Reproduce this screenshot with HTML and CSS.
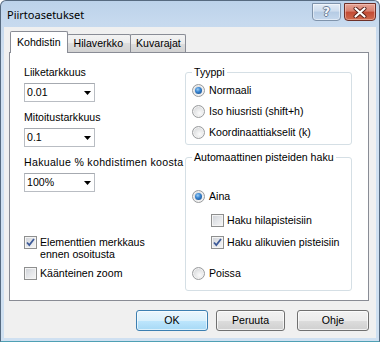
FILE: index.html
```html
<!DOCTYPE html>
<html>
<head>
<meta charset="utf-8">
<link rel="stylesheet" href="styles.css">
</head>
<body>
<div class="window">
  <div class="titlebar">
    <span class="title">Piirtoasetukset</span>
    <div class="caption">
      <div class="cbtn help"><span class="qmark">?</span></div>
      <div class="cbtn close">
        <svg width="14" height="11" viewBox="0 0 14 11">
          <path d="M2.5 1.5 L11.5 9.5 M11.5 1.5 L2.5 9.5" stroke="#5a2018" stroke-width="4" stroke-linecap="round"/>
          <path d="M2.5 1.5 L11.5 9.5 M11.5 1.5 L2.5 9.5" stroke="#ffffff" stroke-width="2.2" stroke-linecap="round"/>
        </svg>
      </div>
    </div>
  </div>
  <div class="client">
    <div class="tabs">
      <div class="tab active">Kohdistin</div>
      <div class="tab t2">Hilaverkko</div>
      <div class="tab t3">Kuvarajat</div>
    </div>
    <div class="panel">
      <div class="left">
        <div class="label">Liiketarkkuus</div>
        <div class="combo"><span>0.01</span><svg class="arrow" width="7" height="4" viewBox="0 0 7 4"><polygon points="0,0 7,0 3.5,4" fill="#000"/></svg></div>
        <div class="label">Mitoitustarkkuus</div>
        <div class="combo"><span>0.1</span><svg class="arrow" width="7" height="4" viewBox="0 0 7 4"><polygon points="0,0 7,0 3.5,4" fill="#000"/></svg></div>
        <div class="label wide">Hakualue % kohdistimen koosta</div>
        <div class="combo"><span>100%</span><svg class="arrow" width="7" height="4" viewBox="0 0 7 4"><polygon points="0,0 7,0 3.5,4" fill="#000"/></svg></div>

        <div class="check-row first">
          <span class="cb checked"><svg width="11" height="11" viewBox="0 0 11 11"><path d="M2 5.5 L4.3 8 L9 2" fill="none" stroke="#3d5a98" stroke-width="1.8"/></svg></span>
          <span class="cb-text">Elementtien merkkaus<br>ennen osoitusta</span>
        </div>
        <div class="check-row second">
          <span class="cb"></span>
          <span class="cb-text">Käänteinen zoom</span>
        </div>
      </div>
      <div class="right">
        <fieldset class="group g1">
          <legend>Tyyppi</legend>
          <div class="opt"><span class="radio on"></span><span>Normaali</span></div>
          <div class="opt"><span class="radio"></span><span>Iso hiusristi (shift+h)</span></div>
          <div class="opt"><span class="radio"></span><span>Koordinaattiakselit (k)</span></div>
        </fieldset>
        <fieldset class="group g2">
          <legend>Automaattinen pisteiden haku</legend>
          <div class="opt aina"><span class="radio on"></span><span>Aina</span></div>
          <div class="opt sub hila"><span class="cb"></span><span>Haku hilapisteisiin</span></div>
          <div class="opt sub alik"><span class="cb checked"><svg width="11" height="11" viewBox="0 0 11 11"><path d="M2 5.5 L4.3 8 L9 2" fill="none" stroke="#3d5a98" stroke-width="1.8"/></svg></span><span>Haku alikuvien pisteisiin</span></div>
          <div class="opt poissa"><span class="radio"></span><span>Poissa</span></div>
        </fieldset>
      </div>
    </div>
    <div class="buttons">
      <div class="btn default ok">OK</div>
      <div class="btn cancel">Peruuta</div>
      <div class="btn helpbtn">Ohje</div>
    </div>
  </div>
</div>
</body>
</html>
```
FILE: styles.css
```css
html, body {
  margin: 0;
  padding: 0;
}
body {
  width: 380px;
  height: 342px;
  overflow: hidden;
  background: #ffffff;
  font-family: "Liberation Sans", Arial, sans-serif;
  font-size: 10.6px;
  color: #000;
}
.window {
  width: 380px;
  height: 342px;
  box-sizing: border-box;
  border: 1px solid #566a80;
  border-bottom-color: #4fa0b4;
  border-radius: 6px 6px 0 0;
  background: linear-gradient(#bcd2ea 0px, #c6d9ee 20px, #d0e0f1 60px, #cfe0f1 100%);
  padding: 0 3px 3px 3px;
  display: flex;
  flex-direction: column;
}
.titlebar {
  height: 26px;
  flex: none;
  display: flex;
  justify-content: space-between;
  align-items: flex-start;
  padding-left: 3px;
}
.title {
  font-family: "Noto Sans", "Open Sans", sans-serif;
  font-size: 11px;
  line-height: 14px;
  padding-top: 7px;
  color: #000;
}
.caption {
  display: flex;
  gap: 3px;
  margin-top: 2px;
  margin-right: 0px;
}
.cbtn {
  height: 18px;
  box-sizing: border-box;
  border-radius: 0 0 4px 4px;
  display: flex;
  align-items: center;
  justify-content: center;
}
.help {
  width: 29px;
  border: 1px solid #7f93ab;
  background: linear-gradient(#e3ecf6 0%, #cddcee 45%, #b5cbe4 50%, #c6d8ed 100%);
  box-shadow: inset 0 0 0 1px rgba(255,255,255,0.5);
}
.qmark {
  font-family: "DejaVu Sans", sans-serif;
  font-weight: bold;
  font-size: 12px;
  line-height: 12px;
  color: #f4f7fb;
  text-shadow: 1px 0 0 #6a7d95, -1px 0 0 #6a7d95, 0 1px 0 #6a7d95, 0 -1px 0 #6a7d95;
}
.close {
  width: 32px;
  border: 1px solid #6e3028;
  background: linear-gradient(#e6a496 0%, #d7806f 45%, #c34a34 50%, #cf6a4e 100%);
  box-shadow: inset 0 0 0 1px rgba(255,220,210,0.45);
}
.client {
  flex: 1;
  background: #f0f0f0;
  padding: 4px 7px 0 5px;
  display: flex;
  flex-direction: column;
}
.tabs {
  display: flex;
  align-items: flex-end;
  height: 21px;
  padding-left: 1px;
}
.tab {
  box-sizing: border-box;
  height: 18px;
  line-height: 13px;
  padding: 2px 6px 2px 6px;
  border: 1px solid #898c95;
  border-bottom: 0;
  margin-left: -1px;
  border-radius: 2px 2px 0 0;
  background: linear-gradient(#f3f3f3 0%, #ebebeb 50%, #dddddd 50%, #d2d2d2 100%);
}
.tab.t2 {
  padding: 2px 7px 2px 6px;
}
.tab.t3 {
  padding: 2px 4px 2px 5px;
}
.tab.active {
  position: relative;
  z-index: 1;
  height: 22px;
  margin-left: 0;
  margin-bottom: -1px;
  padding: 4px 6px 4px 6px;
  background: #ffffff;
}
.panel {
  height: 249px;
  box-sizing: border-box;
  border: 1px solid #898c95;
  background: #ffffff;
  display: flex;
  padding: 13px 0 0 14px;
}
.left {
  width: 161px;
  display: flex;
  flex-direction: column;
}
.label {
  line-height: 13px;
  margin-top: 9px;
  white-space: nowrap;
}
.label:first-child {
  margin-top: 0;
}
.label.wide {
  letter-spacing: 0.3px;
}
.combo {
  margin-top: 4px;
  width: 71px;
  height: 19px;
  box-sizing: border-box;
  border: 1px solid #b9bdc3;
  border-top-color: #a6aab0;
  background: #fff;
  display: flex;
  align-items: center;
  justify-content: space-between;
  padding: 0 3px 0 2px;
  line-height: 13px;
}
.arrow {
  display: block;
}
.check-row {
  display: flex;
  align-items: flex-start;
  gap: 3px;
  line-height: 12px;
}
.check-row.first {
  margin-top: 44px;
}
.check-row.second {
  margin-top: 7px;
  line-height: 13px;
}
.cb {
  width: 13px;
  height: 13px;
  flex: none;
  box-sizing: border-box;
  border: 1px solid #8e8f8f;
  background: linear-gradient(135deg, #cdd0d6 0%, #e4e6e9 50%, #f6f6f6 100%);
  box-shadow: inset 0 0 0 1px #f4f4f4;
  display: flex;
  align-items: center;
  justify-content: center;
}
.cb svg {
  display: block;
}
.right {
  width: 167px;
  display: flex;
  flex-direction: column;
}
.group {
  margin: 0;
  min-width: 0;
  box-sizing: border-box;
  width: 167px;
  border: 1px solid #d5dfe5;
  border-radius: 3px;
  padding: 5px 0 5px 6px;
}
.group legend {
  padding: 0 2px;
  line-height: 13px;
}
.opt {
  display: flex;
  align-items: center;
  gap: 4px;
  line-height: 13px;
  height: 13px;
}
.g1 .opt + .opt {
  margin-top: 8px;
}
.g2 {
  margin-top: 6px;
  padding: 26px 0 10px 6px;
}
.opt.sub {
  padding-left: 19px;
  gap: 3px;
}
.opt.hila {
  margin-top: 11px;
}
.opt.alik {
  margin-top: 9px;
}
.opt.poissa {
  margin-top: 18px;
}
.radio {
  width: 13px;
  height: 13px;
  flex: none;
  box-sizing: border-box;
  border-radius: 50%;
  border: 1px solid #9a9c9e;
  background: radial-gradient(circle at 60% 65%, #fbfbfb 0%, #e6e7e8 45%, #c9cbce 100%);
  box-shadow: inset 0 0 0 1px #f2f2f2;
  display: flex;
  align-items: center;
  justify-content: center;
}
.radio.on::after {
  content: "";
  width: 7px;
  height: 7px;
  border-radius: 50%;
  background: radial-gradient(circle at 40% 35%, #9fd0f6 0%, #3a86d2 40%, #10427e 100%);
}
.buttons {
  display: flex;
  margin-top: 9px;
  padding-left: 127px;
}
.btn {
  height: 21px;
  box-sizing: border-box;
  border: 1px solid #707070;
  border-radius: 3px;
  background: linear-gradient(#f2f2f2 0%, #ebebeb 50%, #dddddd 50%, #cfcfcf 100%);
  box-shadow: inset 0 0 0 1px rgba(255,255,255,0.7);
  display: flex;
  align-items: center;
  justify-content: center;
  line-height: 13px;
}
.btn.default {
  border-color: #3c7fb1;
  background: linear-gradient(#eaf6fd 0%, #d9f0fc 50%, #bee6fd 50%, #a7d9f5 100%);
  box-shadow: inset 0 0 0 1px rgba(255,255,255,0.6);
}
.ok {
  width: 72px;
}
.cancel {
  width: 69px;
  margin-left: 8px;
}
.helpbtn {
  width: 72px;
  margin-left: 12px;
}
```
